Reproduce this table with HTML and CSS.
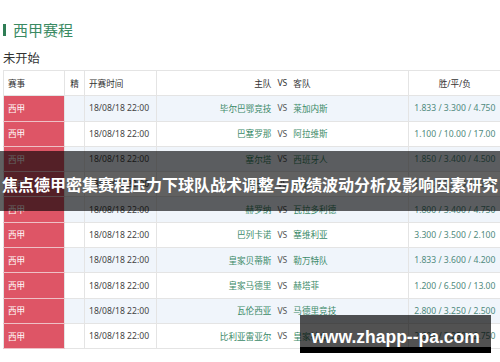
FILE: index.html
```html
<!DOCTYPE html>
<html lang="zh-CN">
<head>
<meta charset="utf-8">
<title>西甲赛程</title>
<link rel="stylesheet" href="styles.css">
</head>
<body>
<div class="page">
  <h2 class="title">西甲赛程</h2>
  <div class="sub">未开始</div>
  <table class="sched">
    <colgroup>
      <col class="c-league"><col class="c-star"><col class="c-time"><col class="c-teams"><col class="c-odds">
    </colgroup>
    <thead>
      <tr><th class="l">赛事</th><th class="mid">精</th><th class="l">开赛时间</th><th><div class="vs-grid hd"><span class="home">主队</span><span class="vs">VS</span><span class="away">客队</span></div></th><th class="mid">胜/平/负</th></tr>
    </thead>
    <tbody>
      <tr><td class="lg">西甲</td><td></td><td class="tm">18/08/18 22:00</td><td><div class="vs-grid"><span class="home">毕尔巴鄂竞技</span><span class="vs">VS</span><span class="away">莱加内斯</span></div></td><td class="odds">1.833 / 3.300 / 4.750</td></tr>
      <tr><td class="lg">西甲</td><td></td><td class="tm">18/08/18 22:00</td><td><div class="vs-grid"><span class="home">巴塞罗那</span><span class="vs">VS</span><span class="away">阿拉维斯</span></div></td><td class="odds">1.100 / 10.00 / 17.00</td></tr>
      <tr><td class="lg">西甲</td><td></td><td class="tm">18/08/18 22:00</td><td><div class="vs-grid"><span class="home">塞尔塔</span><span class="vs">VS</span><span class="away">西班牙人</span></div></td><td class="odds">1.850 / 3.400 / 4.500</td></tr>
      <tr><td class="lg">西甲</td><td></td><td class="tm">18/08/18 22:00</td><td><div class="vs-grid"><span class="home">埃瓦尔</span><span class="vs">VS</span><span class="away">韦斯卡</span></div></td><td class="odds">1.850 / 3.500 / 4.330</td></tr>
      <tr><td class="lg">西甲</td><td></td><td class="tm">18/08/18 22:00</td><td><div class="vs-grid"><span class="home">赫罗纳</span><span class="vs">VS</span><span class="away">瓦拉多利德</span></div></td><td class="odds">1.800 / 3.400 / 4.750</td></tr>
      <tr><td class="lg">西甲</td><td></td><td class="tm">18/08/18 22:00</td><td><div class="vs-grid"><span class="home">巴列卡诺</span><span class="vs">VS</span><span class="away">塞维利亚</span></div></td><td class="odds">3.300 / 3.500 / 2.100</td></tr>
      <tr><td class="lg">西甲</td><td></td><td class="tm">18/08/18 22:00</td><td><div class="vs-grid"><span class="home">皇家贝蒂斯</span><span class="vs">VS</span><span class="away">勒万特队</span></div></td><td class="odds">1.833 / 3.600 / 4.200</td></tr>
      <tr><td class="lg">西甲</td><td></td><td class="tm">18/08/18 22:00</td><td><div class="vs-grid"><span class="home">皇家马德里</span><span class="vs">VS</span><span class="away">赫塔菲</span></div></td><td class="odds">1.200 / 6.500 / 13.00</td></tr>
      <tr><td class="lg">西甲</td><td></td><td class="tm">18/08/18 22:00</td><td><div class="vs-grid"><span class="home">瓦伦西亚</span><span class="vs">VS</span><span class="away">马德里竞技</span></div></td><td class="odds">2.800 / 3.250 / 2.500</td></tr>
      <tr><td class="lg">西甲</td><td></td><td class="tm">18/08/18 22:00</td><td><div class="vs-grid"><span class="home">比利亚雷亚尔</span><span class="vs">VS</span><span class="away">皇家社会</span></div></td><td class="odds">2.600 / 3.250 / 2.750</td></tr>
    </tbody>
  </table>
</div>
<div class="banner">焦点德甲密集赛程压力下球队战术调整与成绩波动分析及影响因素研究</div>
<div class="watermark">www.zhapp--pa.com</div>
</body>
</html>
```

FILE: styles.css
```css
html, body {
  margin: 0;
  padding: 0;
  background: #fff;
  width: 500px;
  height: 362px;
  overflow: hidden;
}
body {
  position: relative;
  font-family: "Noto Sans", "Noto Sans CJK SC", sans-serif;
  color: #333;
}
.page {
  padding: 20px 0 0 3px;
}
.title {
  margin: 0;
  height: 20px;
  line-height: 20px;
  font-size: 15px;
  font-weight: normal;
  color: #3a8a62;
  font-family: "Noto Sans CJK SC", sans-serif;
  display: flex;
  align-items: center;
}
.title::before {
  content: "";
  display: block;
  width: 3px;
  height: 12px;
  background: #2f7d55;
  margin-right: 7px;
}
.sub {
  margin-top: 10px;
  height: 16px;
  line-height: 16px;
  font-size: 12.3px;
  color: #333;
  font-family: "Noto Sans CJK SC", sans-serif;
}
.sched {
  margin-top: 4px;
  border-collapse: collapse;
  table-layout: fixed;
  width: 498px;
  font-size: 8.6px;
  border: 1px solid #e4e4e4;
}
.c-league { width: 61px; }
.c-star { width: 20px; }
.c-time { width: 72px; }
.c-teams { width: 251.7px; }
.c-odds { width: 93.3px; }
.sched th, .sched td {
  border: 1px solid #e4e4e4;
  padding: 0;
  height: 24.3px;
  white-space: nowrap;
  overflow: hidden;
  font-weight: normal;
}
.sched th {
  color: #333;
  background: #fff;
}
.sched th.l { text-align: left; padding-left: 4px; }
.sched th.mid { text-align: center; }
.sched tbody tr:nth-child(odd) td { background: #f0f5fb; }
.sched tbody tr:nth-child(even) td { background: #fff; }
.sched tbody tr td.lg {
  background: #de5566;
  color: #fff;
  padding-left: 4px;
  border-color: #eec0c6 #e4e4e4;
}
.sched td.tm {
  padding-left: 4px;
  color: #444;
}
.vs-grid {
  display: grid;
  grid-template-columns: 1fr auto 1fr;
  column-gap: 6px;
  align-items: center;
}
.vs-grid .home { text-align: right; color: #3b8a68; }
.vs-grid .away { text-align: left; color: #3b8a68; }
.vs-grid .vs { color: #555; }
.vs-grid.hd .home, .vs-grid.hd .away, .vs-grid.hd .vs { color: #333; }
.sched td.odds {
  text-align: center;
  color: #4f8a7d;
}
.banner {
  position: absolute;
  left: 0;
  top: 151px;
  width: 500px;
  height: 60px;
  box-sizing: border-box;
  padding-top: 6px;
  background: rgba(0, 0, 0, 0.62);
  color: #fff;
  font-family: "Noto Sans CJK SC", sans-serif;
  font-weight: bold;
  font-size: 16px;
  white-space: nowrap;
  display: flex;
  align-items: center;
  justify-content: center;
}
.watermark {
  position: absolute;
  left: 300px;
  top: 315px;
  width: 191px;
  height: 38px;
  box-sizing: border-box;
  padding-top: 12px;
  line-height: 20px;
  text-align: center;
  background: linear-gradient(to bottom, rgba(0, 0, 0, 0.68) 0, rgba(0, 0, 0, 0.68) 32px, #000 32px);
  color: #fff;
  font-family: "Liberation Sans", Arial, sans-serif;
  font-weight: bold;
  font-size: 17.5px;
  white-space: nowrap;
}
```
